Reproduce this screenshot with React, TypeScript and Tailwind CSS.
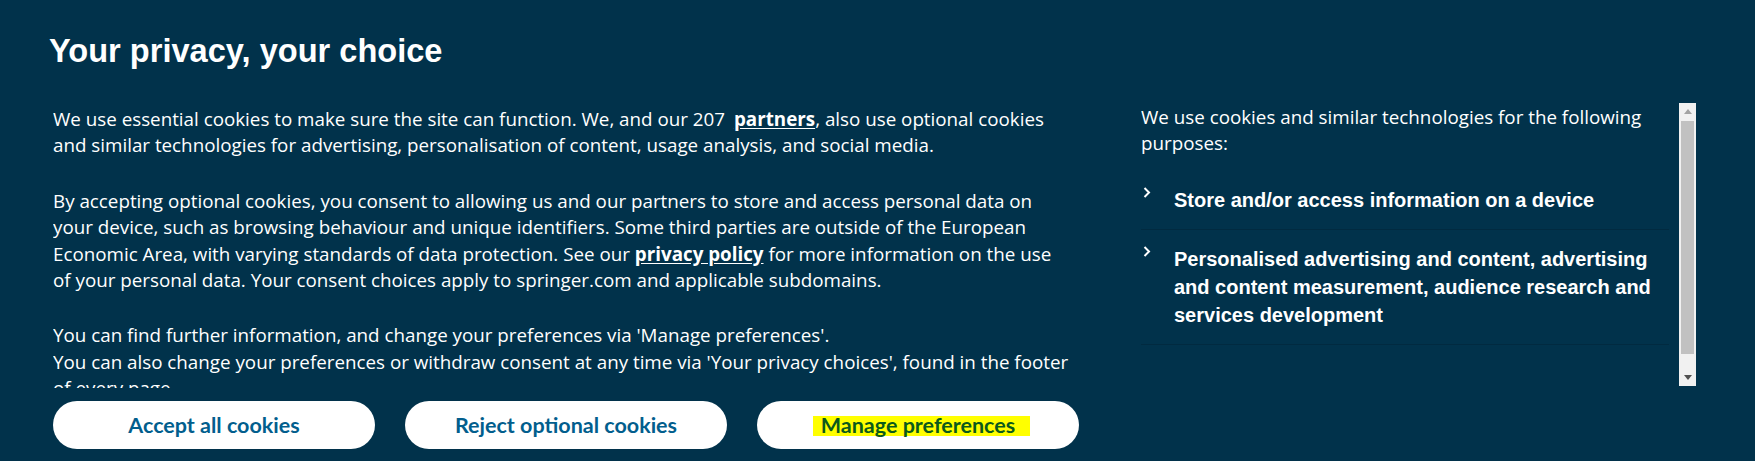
import React from 'react';

function Chevron() {
  return (
    <svg width="8" height="11" viewBox="0 0 8 11" className="block">
      <path d="M1.5 1 L6 5.5 L1.5 10" fill="none" stroke="#ffffff" strokeWidth="2" />
    </svg>
  );
}

function Scrollbar() {
  return (
    <div className="w-[17px] h-full bg-[#f1f1f1] flex flex-col">
      <div className="h-[17px] flex items-center justify-center">
        <svg width="8" height="5" viewBox="0 0 8 5">
          <path d="M0 5 L4 0 L8 5 Z" fill="#a3a3a3" />
        </svg>
      </div>
      <div className="flex-1 px-[2px] pt-[1px]">
        <div className="h-[233px] bg-[#c1c1c1]" />
      </div>
      <div className="h-[17px] flex items-center justify-center">
        <svg width="8" height="5" viewBox="0 0 8 5">
          <path d="M0 0 L8 0 L4 5 Z" fill="#505050" />
        </svg>
      </div>
    </div>
  );
}

export default function App() {
  return (
    <div className="w-full h-screen overflow-hidden bg-[#01324b] text-white">
      <div className="pt-[32px] pl-[49px]">
        <h1 className="font-['Liberation_Sans',Arial,sans-serif] text-[32.6px] leading-[38px] font-bold">
          Your privacy, your choice
        </h1>
      </div>

      <div className="flex mt-[33px] pl-[53px]">
        {/* left: text + buttons */}
        <div className="w-[1026px] flex flex-col">
          <div className="w-[1018px] h-[285px] overflow-hidden pt-[3px] font-['Open_Sans',sans-serif] text-[18.8px] leading-[26.4px]">
            <p className="mb-[29px]">
              We use essential cookies to make sure the site can function. We, and our 207{' '}
              <a className="font-bold underline underline-offset-2 ml-[4px]">partners</a>, also use optional
              cookies and similar technologies for advertising, personalisation of content, usage analysis,
              and social media.
            </p>
            <p className="mb-[29px]">
              By accepting optional cookies, you consent to allowing us and our partners to store and access
              personal data on your device, such as browsing behaviour and unique identifiers. Some third
              parties are outside of the European Economic Area, with varying standards of data protection.
              See our <a className="font-bold underline underline-offset-2">privacy policy</a> for more
              information on the use of your personal data. Your consent choices apply to springer.com and
              applicable subdomains.
            </p>
            <p>
              You can find further information, and change your preferences via 'Manage preferences'.
              <br />
              You can also change your preferences or withdraw consent at any time via 'Your privacy
              choices', found in the footer of every page.
            </p>
          </div>

          <div className="mt-[13px] grid grid-cols-3 gap-[30px] font-['Lato',sans-serif] font-bold text-[21.5px]">
            <button className="h-[48px] rounded-full bg-white text-[#025e8d]">Accept all cookies</button>
            <button className="h-[48px] rounded-full bg-white text-[#025e8d]">Reject optional cookies</button>
            <button className="h-[48px] rounded-full bg-white text-[#0b5a1c]">
              <span className="relative">
                <span className="absolute left-[-8px] right-[-15px] top-[4px] bottom-[2px] bg-[#ffff00]" />
                <span className="relative">Manage preferences</span>
              </span>
            </button>
          </div>
        </div>

        {/* right: purposes */}
        <div className="ml-[62px] flex h-[283px]">
          <div className="w-[538px] pr-[10px] pt-[1px] overflow-hidden">
            <p className="font-['Open_Sans',sans-serif] text-[18.8px] leading-[26.4px] mb-[14px]">
              We use cookies and similar technologies for the following purposes:
            </p>
            <ul className="font-['Liberation_Sans',Arial,sans-serif] font-bold text-[20px] leading-[28px]">
              <li className="flex py-[15px] border-b border-[#012a40]">
                <div className="w-[33px] shrink-0 pl-[2px] pt-[1px]">
                  <Chevron />
                </div>
                <span>Store and/or access information on a device</span>
              </li>
              <li className="flex py-[15px] border-b border-[#012a40]">
                <div className="w-[33px] shrink-0 pl-[2px] pt-[1px]">
                  <Chevron />
                </div>
                <span>
                  Personalised advertising and content, advertising and content measurement, audience research
                  and services development
                </span>
              </li>
            </ul>
          </div>
          <Scrollbar />
        </div>
      </div>
    </div>
  );
}
